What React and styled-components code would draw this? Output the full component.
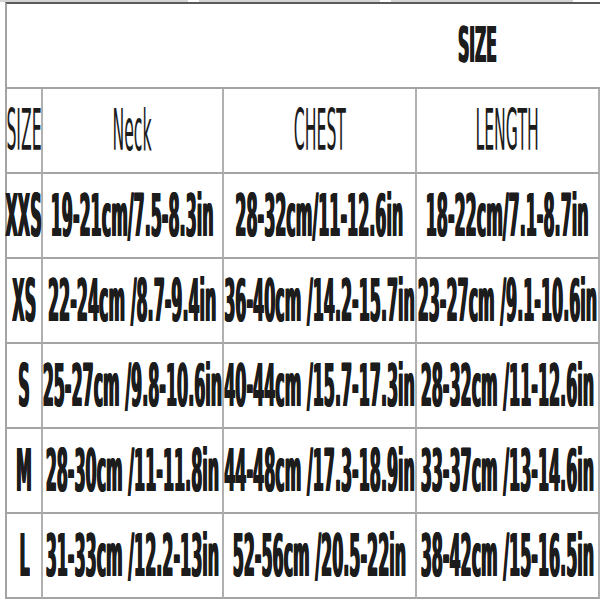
import React from 'react';
import styled, { createGlobalStyle } from 'styled-components';

const GlobalStyle = createGlobalStyle`
  html, body {
    margin: 0;
    padding: 0;
    background: #fff;
  }
  body {
    font-family: "DejaVu Sans", "Liberation Sans", sans-serif;
    color: #1c1c1c;
  }
`;

const rows = [
  ['XXS', '19-21cm/7.5-8.3in', '28-32cm/11-12.6in', '18-22cm/7.1-8.7in'],
  ['XS', '22-24cm /8.7-9.4in', '36-40cm /14.2-15.7in', '23-27cm /9.1-10.6in'],
  ['S', '25-27cm /9.8-10.6in', '40-44cm /15.7-17.3in', '28-32cm /11-12.6in'],
  ['M', '28-30cm /11-11.8in', '44-48cm /17.3-18.9in', '33-37cm /13-14.6in'],
  ['L', '31-33cm /12.2-13in', '52-56cm /20.5-22in', '38-42cm /15-16.5in'],
];

const Page = styled.div`
  width: 600px;
  height: 600px;
  overflow: hidden;
`;

const TopStrip = styled.div`
  display: flex;
  gap: 11px;
  height: 2px;
`;

const StripPiece = styled.div`
  width: ${(p) => p.$w}px;
  background: #d4d4d4;
`;

const Table = styled.div`
  margin-left: 5px;
  display: grid;
  grid-template-columns: 36px 181px 193px 183px;
  grid-auto-rows: 85px;
  border-top: 2px solid #5a5a5a;
  border-left: 2px solid #a4a4a4;
`;

const TitleCell = styled.div`
  grid-column: 1 / -1;
  display: flex;
  align-items: center;
  justify-content: flex-end;
  padding-right: 60px;
  padding-bottom: 2px;
  border-bottom: 2px solid #a4a4a4;
  box-sizing: border-box;
`;

const Cell = styled.div`
  display: flex;
  align-items: center;
  justify-content: center;
  box-sizing: border-box;
  border-right: 2px solid #b0b0b0;
  border-bottom: 2px solid #a4a4a4;
  min-width: 0;
`;

const Squash = styled.span`
  display: inline-block;
  flex-shrink: 0;
  white-space: nowrap;
  font-size: ${(p) => p.$size}px;
  font-weight: ${(p) => (p.$bold ? 700 : 400)};
  line-height: 1;
  transform: scaleX(${(p) => p.$sx});
  transform-origin: center;
  text-shadow: ${(p) =>
    p.$bold
      ? '1.8px 0 0 currentColor, -1.8px 0 0 currentColor'
      : 'none'};
`;

export default function App() {
  return (
    <Page>
      <GlobalStyle />
      <TopStrip>
        <StripPiece $w={188} />
        <StripPiece $w={181} />
        <StripPiece $w={182} />
      </TopStrip>
      <Table>
        <TitleCell>
          <Squash $size={50} $sx={0.31} $bold>SIZE</Squash>
        </TitleCell>

        <Cell><Squash $size={57} $sx={0.275}>SIZE</Squash></Cell>
        <Cell><Squash $size={57} $sx={0.275}>Neck</Squash></Cell>
        <Cell><Squash $size={57} $sx={0.275}>CHEST</Squash></Cell>
        <Cell><Squash $size={57} $sx={0.275}>LENGTH</Squash></Cell>

        {rows.map((row) =>
          row.map((text, i) => (
            <Cell key={row[0] + i}>
              <Squash $size={58} $sx={0.275} $bold>{text}</Squash>
            </Cell>
          ))
        )}
      </Table>
    </Page>
  );
}
